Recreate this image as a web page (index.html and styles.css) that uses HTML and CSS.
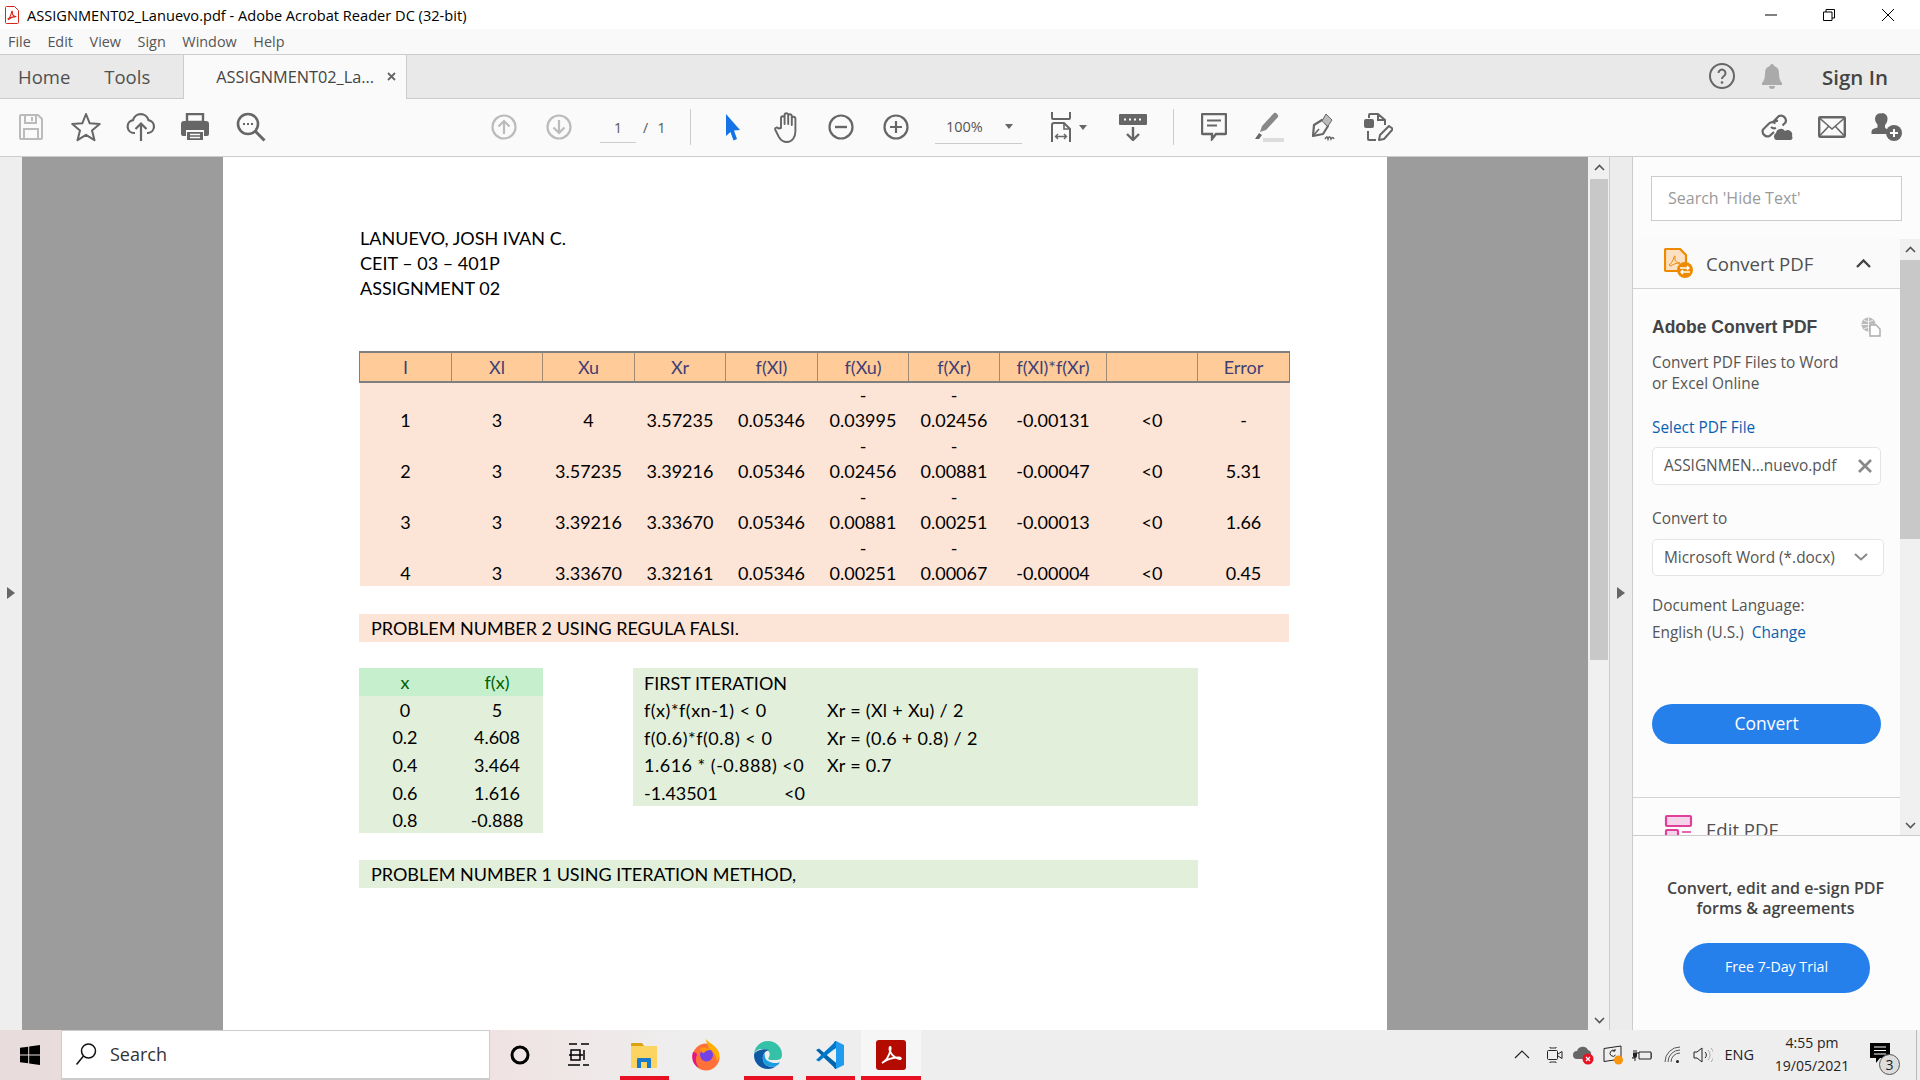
FILE: index.html
```html
<!DOCTYPE html>
<html lang="en">
<head>
  <meta charset="UTF-8" />
  <title>ASSIGNMENT02_Lanuevo.pdf - Adobe Acrobat Reader DC (32-bit)</title>
  <link rel="stylesheet" href="styles.css">
</head>
<body>
  <div class="titlebar">
    <svg class="pdf-mini" width="14" height="18" viewBox="0 0 14 18"><path d="M1.5 .5h8l4 4v12a1 1 0 0 1-1 1h-11a1 1 0 0 1-1-1v-15a1 1 0 0 1 1-1z" fill="#fff" stroke="#d8261c"/><path d="M3 13c2-1 3-4 3.600-7 .3-1.500 1-1 .8.500-.3 2 1.200 4 4 4.200-3-.2-6 .8-8 2.800z" fill="none" stroke="#d8261c" stroke-width="1.100"/></svg>
    <span class="title-text">ASSIGNMENT02_Lanuevo.pdf - Adobe Acrobat Reader DC (32-bit)</span>
    <div class="win-btns">
      <span class="win-btn"><svg width="12" height="12" viewBox="0 0 12 12"><path d="M0 6h12" stroke="#000"/></svg></span>
      <span class="win-btn"><svg width="12" height="12" viewBox="0 0 12 12"><path d="M.5 3h8.500v8.500h-8.500zM3 3v-2.500h8.500v8.500h-2.500" fill="none" stroke="#000"/></svg></span>
      <span class="win-btn"><svg width="12" height="12" viewBox="0 0 12 12"><path d="M0 0l12 12M12 0l-12 12" stroke="#000"/></svg></span>
    </div>
  </div>

  <div class="menubar">
    <span>File</span><span>Edit</span><span>View</span><span>Sign</span><span>Window</span><span>Help</span>
  </div>

  <div class="tabbar">
    <span class="tab-link tab-home">Home</span>
    <span class="tab-link tab-tools">Tools</span>
    <div class="tab-active">
      <span>ASSIGNMENT02_La...</span>
      <svg width="9" height="9" viewBox="0 0 9 9"><path d="M1 1l7 7M8 1l-7 7" stroke="#666" stroke-width="1.800"/></svg>
    </div>
    <div class="tab-right">
      <svg width="28" height="28" viewBox="0 0 28 28"><circle cx="14" cy="14" r="12" fill="none" stroke="#666" stroke-width="2"/><path d="M10.500 11a3.500 3.500 0 1 1 5.500 3c-1.300.9-2 1.500-2 3" fill="none" stroke="#666" stroke-width="2"/><circle cx="14" cy="20.500" r="1.300" fill="#666"/></svg>
      <svg class="bell" width="22" height="26" viewBox="0 0 22 26"><path d="M11 1c1.500 0 2 1 2 2 3.500 1 5 3.500 5 7 0 5 1 8 3 10v2h-20v-2c2-2 3-5 3-10 0-3.500 1.500-6 5-7 0-1 .5-2 2-2z" fill="#aaa"/><path d="M8 23h6a3 3 0 0 1-6 0z" fill="#aaa"/></svg>
      <span class="signin">Sign In</span>
    </div>
  </div>

  <div class="toolbar">
    <span class="tool"><svg width="24" height="26" viewBox="0 0 24 26"><path d="M2 1h17l4 4v19a1 1 0 0 1-1 1h-20a1 1 0 0 1-1-1v-22a1 1 0 0 1 1-1z" fill="none" stroke="#bbb" stroke-width="2"/><path d="M6 1v8h11v-8M5 25v-10h14v10" fill="none" stroke="#bbb" stroke-width="2"/><path d="M13 3v4" stroke="#bbb" stroke-width="2"/></svg></span>
    <span class="tool"><svg width="30" height="30" viewBox="0 0 30 30"><path d="M15 2l3.700 9.300 10 .7-7.700 6.400 2.500 9.800-8.500-5.400-8.500 5.400 2.500-9.800-7.700-6.400 10-.7z" fill="none" stroke="#666" stroke-width="2" stroke-linejoin="round"/></svg></span>
    <span class="tool"><svg width="30" height="30" viewBox="0 0 30 30"><path d="M9 21h-1a6.500 6.500 0 0 1-1-12.900 8 8 0 0 1 15.500 0 6.500 6.500 0 0 1-.5 12.900h-1" fill="none" stroke="#666" stroke-width="2.200"/><path d="M15 29v-17M9.500 17l5.500-5.500 5.500 5.500" fill="none" stroke="#666" stroke-width="2.200"/></svg></span>
    <span class="tool tool-print"><svg width="28" height="28" viewBox="0 0 28 28"><path d="M6 9v-8h16v8z" fill="none" stroke="#666" stroke-width="2.400"/><path d="M3 8h22a3 3 0 0 1 3 3v10a2 2 0 0 1-2 2h-3v-6h-18v6h-3a2 2 0 0 1-2-2v-10a3 3 0 0 1 3-3z" fill="#666"/><path d="M6 19h16v8h-16z" fill="#666"/><path d="M9 21.500h10M9 24.500h10" stroke="#fafafa" stroke-width="1.400"/></svg></span>
    <span class="tool tool-find"><svg width="30" height="30" viewBox="0 0 30 30"><circle cx="12" cy="12" r="10" fill="none" stroke="#666" stroke-width="2.600"/><path d="M19 19l9.500 9.500" stroke="#666" stroke-width="3"/><path d="M7 12h2M11 12h2M15 12h2" stroke="#666" stroke-width="2"/></svg></span>

    <div class="tool-mid">
      <span class="tool"><svg width="26" height="26" viewBox="0 0 26 26"><circle cx="13" cy="13" r="11.500" fill="none" stroke="#bbb" stroke-width="2.200"/><path d="M13 20v-13M7.500 12.500l5.500-5.500 5.500 5.500" fill="none" stroke="#bbb" stroke-width="2.200"/></svg></span>
      <span class="tool"><svg width="26" height="26" viewBox="0 0 26 26"><circle cx="13" cy="13" r="11.500" fill="none" stroke="#bbb" stroke-width="2.200"/><path d="M13 6v13M7.500 13.500l5.500 5.500 5.500-5.500" fill="none" stroke="#bbb" stroke-width="2.200"/></svg></span>
      <div class="page-num"><span class="page-cur">1</span><span class="page-of">/ &nbsp;1</span></div>
      <span class="sep sep-a"></span>
      <span class="tool"><svg width="18" height="28" viewBox="0 0 18 28"><path d="M2 1l14 16-6 .5 3 8.500-3.500 1.500-3-8.500-4.500 4z" fill="#1473e6"/></svg></span>
      <span class="tool tool-hand"><svg width="28" height="32" viewBox="0 0 28 32"><path d="M7 17v-10a1.800 1.800 0 0 1 3.600 0v6v-9a1.800 1.800 0 0 1 3.600 0v9v-8a1.800 1.800 0 0 1 3.600 0v9v-6.500a1.800 1.800 0 0 1 3.600 0v13c0 6-3.500 10.500-8.500 10.500-4 0-6-1.500-8-5l-3.500-7c-1-2 1.500-3.500 3-1.500z" fill="none" stroke="#666" stroke-width="1.900" stroke-linejoin="round"/></svg></span>
      <span class="tool"><svg width="26" height="26" viewBox="0 0 26 26"><circle cx="13" cy="13" r="11.500" fill="none" stroke="#666" stroke-width="2.200"/><path d="M7 13h12" stroke="#666" stroke-width="2.400"/></svg></span>
      <span class="tool"><svg width="26" height="26" viewBox="0 0 26 26"><circle cx="13" cy="13" r="11.500" fill="none" stroke="#666" stroke-width="2.200"/><path d="M7 13h12M13 7v12" stroke="#666" stroke-width="2.200"/></svg></span>
      <div class="zoom-select"><span>100%</span><i class="caret"></i></div>
      <div class="tool tool-fit"><svg width="24" height="30" viewBox="0 0 24 30"><path d="M2 0v6a1 1 0 0 0 1 1h16a1 1 0 0 0 1-1v-6" fill="none" stroke="#666" stroke-width="2"/><path d="M2 30v-17a2 2 0 0 1 2-2h10l6 6v13" fill="none" stroke="#666" stroke-width="2"/><path d="M14 11v6h6" fill="none" stroke="#666" stroke-width="1.600"/><path d="M5.500 24.500h11M8 22l-2.500 2.500 2.500 2.500M14 22l2.500 2.500-2.500 2.500" fill="none" stroke="#666" stroke-width="1.400"/></svg><i class="caret"></i></div>
      <span class="tool"><svg width="30" height="28" viewBox="0 0 30 28"><path d="M2 1h26a1 1 0 0 1 1 1v9a1 1 0 0 1-1 1h-26a1 1 0 0 1-1-1v-9a1 1 0 0 1 1-1z" fill="#666"/><path d="M6 6.500h2M11 6.500h2M16 6.500h2M21 6.500h2" stroke="#fafafa" stroke-width="2"/><path d="M15 14v13M9 21l6 6 6-6" fill="none" stroke="#666" stroke-width="2.400"/></svg></span>
      <span class="sep sep-b"></span>
      <span class="tool"><svg width="26" height="28" viewBox="0 0 26 28"><path d="M2 1h22a1 1 0 0 1 1 1v18a1 1 0 0 1-1 1h-9l-4 5v-5h-9a1 1 0 0 1-1-1v-18a1 1 0 0 1 1-1z" fill="none" stroke="#666" stroke-width="2.400"/><path d="M6 7.500h14M6 12.500h10" stroke="#666" stroke-width="1.800"/></svg></span>
      <span class="tool"><svg width="30" height="30" viewBox="0 0 30 30"><path d="M6 20l2-6 12-13c1.500-1 5 2 4 4l-12 13z" fill="#888"/><path d="M5 21l3 2-3 4h-4z" fill="#666"/><path d="M9 26h21v4h-21z" fill="#ddd"/></svg></span>
      <span class="tool"><svg width="30" height="30" viewBox="0 0 30 30"><path d="M4 24l1-11 8-5 6 6-5 8z" fill="none" stroke="#666" stroke-width="2.200" stroke-linejoin="round"/><path d="M13 9l4-7 6 6-4 6" fill="#bbb" stroke="#666" stroke-width="1"/><path d="M4 24l6-7" stroke="#666" stroke-width="1.600"/><path d="M16 27c2-3 2-3 3 0 1-3 2-3 3 0 1-2 2-2 3 0" fill="none" stroke="#666" stroke-width="1.600"/></svg></span>
      <span class="tool tool-edit"><svg width="30" height="30" viewBox="0 0 30 30"><rect x="1" y="7" width="10" height="9" rx="2" fill="#666"/><path d="M6 6v-3a1 1 0 0 1 1-1h8l7 6v5M22 8h-7v-6" fill="none" stroke="#666" stroke-width="2"/><path d="M5 19v8a1 1 0 0 0 1 1h7" fill="none" stroke="#666" stroke-width="2"/><path d="M16 28l1-5 9-9 4 3-9 10z" fill="none" stroke="#666" stroke-width="2" stroke-linejoin="round"/></svg></span>
    </div>

    <div class="tool-end">
      <span class="tool"><svg width="32" height="28" viewBox="0 0 32 28"><path d="M12 9l6-6a5 5 0 0 1 6.500 6.500l-3 3M13 19l-4.500 4a5 5 0 0 1-6.500-6.500l6-6a5 5 0 0 1 6.500 0M17 8a5 5 0 0 0-4 1M10 14a5 5 0 0 0 5 1" fill="none" stroke="#666" stroke-width="2.200"/><path d="M15 27a4 4 0 0 1 0-7 5 5 0 0 1 9-2 4.500 4.500 0 0 1 7 5 3 3 0 0 1-1 4z" fill="#666"/></svg></span>
      <span class="tool"><svg width="28" height="22" viewBox="0 0 28 22"><rect x="1.200" y="1.200" width="25.600" height="19.600" rx="1" fill="none" stroke="#666" stroke-width="2.400"/><path d="M1.500 2l12.500 11 12.500-11M1.500 20l9-9.500M26.500 20l-9-9.500" fill="none" stroke="#666" stroke-width="1.600"/></svg></span>
      <span class="tool"><svg width="32" height="30" viewBox="0 0 32 30"><path d="M11 1a5.500 5.500 0 0 1 5.500 6c0 3-1.500 5-2.500 6v3l3 1.500a8 8 0 0 0-1.500 4.500h-15v-2c0-2 1-3 3-3.500l3-1v-3c-1-1-2.500-3-2.500-6a5.500 5.500 0 0 1 7-5z" fill="#666"/><circle cx="23" cy="21" r="8" fill="#666"/><path d="M19 21h8M23 17v8" stroke="#fff" stroke-width="2"/></svg></span>
    </div>
  </div>

  <div class="workspace">
    <div class="left-gutter"><i class="tri-right"></i></div>

    <div class="viewer">
      <div class="page">
        <div class="author">
          <div>LANUEVO, JOSH IVAN C.</div>
          <div>CEIT – 03 – 401P</div>
          <div>ASSIGNMENT 02</div>
        </div>

        <table class="iter-table">
          <colgroup>
            <col class="c92"><col class="c91"><col class="c92"><col class="c91"><col class="c92"><col class="c91"><col class="c91"><col class="c107"><col class="c91"><col class="c92">
          </colgroup>
          <thead>
            <tr><th>I</th><th>Xl</th><th>Xu</th><th>Xr</th><th>f(Xl)</th><th>f(Xu)</th><th>f(Xr)</th><th>f(Xl)*f(Xr)</th><th></th><th>Error</th></tr>
          </thead>
          <tbody>
            <tr><td>1</td><td>3</td><td>4</td><td>3.57235</td><td>0.05346</td><td><span class="dash">-</span>0.03995</td><td><span class="dash">-</span>0.02456</td><td>-0.00131</td><td>&lt;0</td><td>-</td></tr>
            <tr><td>2</td><td>3</td><td>3.57235</td><td>3.39216</td><td>0.05346</td><td><span class="dash">-</span>0.02456</td><td><span class="dash">-</span>0.00881</td><td>-0.00047</td><td>&lt;0</td><td>5.31</td></tr>
            <tr><td>3</td><td>3</td><td>3.39216</td><td>3.33670</td><td>0.05346</td><td><span class="dash">-</span>0.00881</td><td><span class="dash">-</span>0.00251</td><td>-0.00013</td><td>&lt;0</td><td>1.66</td></tr>
            <tr class="row-cut"><td>4</td><td>3</td><td>3.33670</td><td>3.32161</td><td>0.05346</td><td><span class="dash">-</span>0.00251</td><td><span class="dash">-</span>0.00067</td><td>-0.00004</td><td>&lt;0</td><td>0.45</td></tr>
          </tbody>
        </table>

        <div class="bar bar-orange">PROBLEM NUMBER 2 USING REGULA FALSI.</div>

        <div class="green-row">
          <table class="xy-table">
            <thead><tr><th>x</th><th>f(x)</th></tr></thead>
            <tbody>
              <tr><td>0</td><td>5</td></tr>
              <tr><td>0.2</td><td>4.608</td></tr>
              <tr><td>0.4</td><td>3.464</td></tr>
              <tr><td>0.6</td><td>1.616</td></tr>
              <tr><td>0.8</td><td>-0.888</td></tr>
            </tbody>
          </table>
          <div class="first-iter">
            <div class="iter-line">FIRST ITERATION</div>
            <div class="iter-line"><span class="iter-a">f(x)*f(xn-1) &lt; 0</span><span class="iter-b">Xr = (Xl + Xu) / 2</span></div>
            <div class="iter-line"><span class="iter-a">f(0.6)*f(0.8) &lt; 0</span><span class="iter-b">Xr = (0.6 + 0.8) / 2</span></div>
            <div class="iter-line"><span class="iter-a">1.616 * (-0.888) &lt;0</span><span class="iter-b">Xr = 0.7</span></div>
            <div class="iter-line"><span class="iter-split"><span>-1.43501</span><span>&lt;0</span></span></div>
          </div>
        </div>

        <div class="bar bar-green">PROBLEM NUMBER 1 USING ITERATION METHOD,</div>
      </div>
    </div>

    <div class="vscroll">
      <svg width="11" height="7" viewBox="0 0 11 7"><path d="M1 6l4.500-4.500 4.500 4.500" fill="none" stroke="#555" stroke-width="1.600"/></svg>
      <div class="vthumb"></div>
      <svg class="vscroll-down" width="11" height="7" viewBox="0 0 11 7"><path d="M1 1l4.500 4.500 4.500-4.500" fill="none" stroke="#555" stroke-width="1.600"/></svg>
    </div>

    <div class="right-gutter"><i class="tri-right"></i></div>

    <aside class="panel">
      <div class="panel-search"><div class="search-box">Search 'Hide Text'</div></div>
      <div class="panel-scroll">
        <div class="panel-body">
          <div class="sec-head">
            <svg width="30" height="30" viewBox="0 0 30 30"><path d="M2 1h14l6 6v15a1 1 0 0 1-1 1h-19a1 1 0 0 1-1-1v-20a1 1 0 0 1 1-1z" fill="#fbe0c3" stroke="#ee8a00" stroke-width="2.200"/><path d="M5 17c2-1 4-4 5-8 .5-2 1.500-1 1 1-.5 3 2 5 5 5-3 0-7 1-9 3z" fill="none" stroke="#ee8a00"/><circle cx="21" cy="22" r="8" fill="#ee8a00"/><path d="M16 20h9M23 18l2 2-2 2M26 24h-9M19 22l-2 2 2 2" fill="none" stroke="#fff" stroke-width="1.400"/></svg>
            <span class="sec-title">Convert PDF</span>
            <svg class="sec-chev" width="15" height="9" viewBox="0 0 15 9"><path d="M1 8l6.500-6.500 6.500 6.500" fill="none" stroke="#444" stroke-width="2.400"/></svg>
          </div>
          <div class="sec-content">
            <div class="acp-head">
              <span>Adobe Convert PDF</span>
              <svg width="20" height="20" viewBox="0 0 20 20"><circle cx="7.500" cy="7.500" r="7" fill="#bbb"/><path d="M1 7.500h13M7.500 1v13M3 3c3 2 6 2 9 0M3 12c3-2 6-2 9 0" fill="none" stroke="#fff" stroke-width=".8"/><path d="M9 8h6l4 4v7h-10z" fill="#fff" stroke="#aaa" stroke-width="1.400"/></svg>
            </div>
            <p class="acp-desc">Convert PDF Files to Word<br>or Excel Online</p>
            <div class="lbl lbl-link">Select PDF File</div>
            <div class="field field-file">
              <span>ASSIGNMEN...nuevo.pdf</span>
              <svg width="14" height="14" viewBox="0 0 14 14"><path d="M1 1l12 12M13 1l-12 12" stroke="#888" stroke-width="2.600"/></svg>
            </div>
            <div class="lbl lbl-to">Convert to</div>
            <div class="field field-select">
              <span>Microsoft Word (*.docx)</span>
              <svg width="14" height="8" viewBox="0 0 14 8"><path d="M1 1l6 5.500 6-5.500" fill="none" stroke="#888" stroke-width="2"/></svg>
            </div>
            <div class="lbl lbl-lang">Document Language:</div>
            <div class="lbl lbl-eng">English (U.S.) &nbsp;<a>Change</a></div>
            <div class="btn-convert">Convert</div>
          </div>
          <div class="sec-head sec-edit">
            <svg width="30" height="30" viewBox="0 0 30 30"><rect x="2" y="2" width="25" height="10" rx="1" fill="#f5d3e8" stroke="#e0409c" stroke-width="2.200"/><rect x="2" y="16" width="12" height="12" rx="1" fill="#f5d3e8" stroke="#e0409c" stroke-width="2.200"/><path d="M18 18h9" stroke="#e0409c" stroke-width="1.600"/></svg>
            <span class="sec-title">Edit PDF</span>
          </div>
        </div>
        <div class="panel-track">
          <div class="track-btn"><svg width="11" height="7" viewBox="0 0 11 7"><path d="M1 6l4.500-4.500 4.500 4.500" fill="none" stroke="#555" stroke-width="1.600"/></svg></div>
          <div class="track-thumb"></div>
          <svg class="track-down" width="11" height="7" viewBox="0 0 11 7"><path d="M1 1l4.500 4.500 4.500-4.500" fill="none" stroke="#555" stroke-width="1.600"/></svg>
        </div>
      </div>
      <div class="promo">
        <p>Convert, edit and e-sign PDF<br>forms &amp; agreements</p>
        <div class="btn-trial">Free 7-Day Trial</div>
      </div>
    </aside>
  </div>

  <div class="taskbar">
    <div class="start"><svg width="20" height="20" viewBox="0 0 20 20"><path d="M0 2.800l8.200-1.100v7.900h-8.200zM9.200 1.500l10.800-1.500v9.600h-10.800zM0 10.400h8.200v7.900l-8.200-1.100zM9.200 10.400h10.800v9.600l-10.800-1.500z" fill="#000"/></svg></div>
    <div class="task-search">
      <svg width="22" height="24" viewBox="0 0 22 24"><circle cx="13.500" cy="9" r="7" fill="none" stroke="#111" stroke-width="1.500"/><path d="M8.500 14l-7 8.500" stroke="#111" stroke-width="1.500"/></svg>
      <span>Search</span>
    </div>
    <div class="task-icons">
      <span class="task-ic ic-cortana"><svg width="20" height="20" viewBox="0 0 20 20"><circle cx="10" cy="10" r="8" fill="none" stroke="#000" stroke-width="3"/></svg></span>
      <span class="task-ic ic-view"><svg width="22" height="24" viewBox="0 0 22 24"><path d="M1 1h8M13 1h8M3 7h9v10h-9zM16 7v10M0 22h12M15 22h6M1 12h14" fill="none" stroke="#000" stroke-width="1.500"/></svg></span>
      <span class="task-ic ic-run ic-explorer"><svg width="28" height="28" viewBox="0 0 28 28"><path d="M1 3a1 1 0 0 1 1-1h10l2 3h-13z" fill="#dba10f"/><path d="M1 5h26v21a1 1 0 0 1-1 1h-24a1 1 0 0 1-1-1z" fill="#fcd462"/><path d="M7 27v-9a1 1 0 0 1 1-1h12a1 1 0 0 1 1 1v9h-4v-6h-6v6z" fill="#1979ca"/></svg></span>
      <span class="task-ic ic-firefox"><svg width="30" height="32" viewBox="0 0 30 32"><circle cx="15" cy="18" r="13.500" fill="#ff7139"/><path d="M15 0c3 4 9 6 12 12 2 4 1 8-1 10-1-6-4-10-8-13-1-3-3-6-3-9z" fill="#ffb000"/><path d="M2 13c-2 6 0 13 6 16-3-4-4-9-2-13 0-2-2-3-4-3z" fill="#e31587"/><circle cx="15.500" cy="16" r="6.500" fill="#7542e5"/><path d="M9 10c3-2 9-2 12 1-3 0-6 0-8 3-2 0-3-2-4-4z" fill="#ff980e"/></svg></span>
      <span class="task-ic ic-run ic-edge"><svg width="30" height="30" viewBox="0 0 30 30"><path d="M15 1a14 14 0 0 1 14 14c0 2-1 5-5 5h-7c-2 0-2-2-1-3 2-3 0-8-6-8-5 0-8 2-9 5 1-8 7-13 14-13z" fill="#35c1a7"/><path d="M1 15c0 8 6 14 14 14 3 0 6-1 8-3-6 2-12 0-13-6-1-5 2-9 6-10-3-1-6-1-9 0-4 1-6 3-6 5z" fill="#0c59a4"/><path d="M10 20c1 6 7 8 13 6 2-1 3-2 4-4-3 2-9 1-12-1-2-1-4-4-3-8-2 2-3 4-2 7z" fill="#1b9de2"/></svg></span>
      <span class="task-ic ic-run ic-code"><svg width="30" height="30" viewBox="0 0 30 30"><path d="M21 1l8 4v20l-8 4-13-12z" fill="#1f9cf0"/><path d="M21 1v28l-2-1v-26z" fill="#0065a9"/><path d="M21 8l-10 7.500 10 7.500z" fill="#eef0f0"/><path d="M1 10l3-1.500 17 14.500v6z" fill="#0065a9"/><path d="M1 20l3 1.500 17-14.500v-6z" fill="#007acc"/></svg></span>
      <span class="task-ic ic-run ic-acro"><svg width="30" height="30" viewBox="0 0 30 30"><rect width="30" height="30" rx="3" fill="#b30b00"/><path d="M6 23c4-2 7-7 8.500-13 .7-3-.5-4-1-2-.5 4 4 10 10 11 2 .3 2-1.500-.5-1.500-6 0-12 1.500-17 5.500" fill="none" stroke="#fff" stroke-width="1.800"/></svg></span>
    </div>
    <div class="tray">
      <span class="tray-ic tray-up"><svg width="16" height="9" viewBox="0 0 16 9"><path d="M1 8l7-7 7 7" fill="none" stroke="#222" stroke-width="1.200"/></svg></span>
      <span class="tray-ic"><svg width="16" height="16" viewBox="0 0 16 16"><path d="M3 0v1h6v-1M3 16v-1h6v1" fill="none" stroke="#333"/><rect x=".5" y="3.500" width="10" height="9" rx="1" fill="none" stroke="#222"/><path d="M11 7l4-2.500v7l-4-2.500" fill="none" stroke="#222"/></svg></span>
      <span class="tray-ic"><svg width="22" height="20" viewBox="0 0 22 20"><path d="M4 14a4 4 0 0 1 0-8 6 6 0 0 1 11-1 4 4 0 0 1 3 5h-6v4z" fill="#666"/><circle cx="15" cy="14" r="5.500" fill="#e81123"/><path d="M13 12l4 4M17 12l-4 4" stroke="#fff" stroke-width="1.300"/></svg></span>
      <span class="tray-ic"><svg width="20" height="20" viewBox="0 0 20 20"><path d="M1 3.500l17-2.500v13l-17 2.500z" fill="none" stroke="#222"/><path d="M12 6a3 3 0 1 0 .5 4M12 6v-2M12 6h-2.500" fill="none" stroke="#222"/><circle cx="15.500" cy="15" r="4.500" fill="#f7950e"/></svg></span>
      <span class="tray-ic"><svg width="20" height="14" viewBox="0 0 20 14"><path d="M7 4h12v7h-12zM19 6h1v3h-1M7 5h-3M0 9v1h3" fill="none" stroke="#222"/><path d="M1 5h4v3a2 2 0 0 1-4 0z" fill="#222"/><path d="M2 2v3M4 2v3M3 10v3" stroke="#222"/></svg></span>
      <span class="tray-ic tray-wifi"><svg width="18" height="18" viewBox="0 0 18 18"><path d="M1 16a15 15 0 0 1 15-15M4 16a12 12 0 0 1 12-12M7 16a9 9 0 0 1 9-9" fill="none" stroke="#555" stroke-width="1"/><circle cx="13.500" cy="15.500" r="1.500" fill="#222"/></svg></span>
      <span class="tray-ic"><svg width="20" height="16" viewBox="0 0 20 16"><path d="M1 5h3l5-4v14l-5-4h-3z" fill="none" stroke="#222"/><path d="M12 5a4 4 0 0 1 0 6" fill="none" stroke="#222"/><path d="M15 3a7 7 0 0 1 0 10M18 1a10 10 0 0 1 0 14" fill="none" stroke="#aaa"/></svg></span>
      <span class="tray-lang">ENG</span>
      <div class="tray-clock"><span>4:55 pm</span><span>19/05/2021</span></div>
      <span class="tray-notif"><svg width="21" height="20" viewBox="0 0 21 20"><path d="M0 0h20v15h-10l-4 5v-5h-6z" fill="#000"/><path d="M4 4h12M4 7.500h12M4 11h12" stroke="#fff"/></svg><b class="notif-count">3</b></span>
      <span class="tray-show"></span>
    </div>
  </div>
</body>
</html>
```

FILE: styles.css
```css
* { box-sizing: border-box; }
html, body { margin: 0; height: 100%; }
body {
  width: 1920px;
  height: 1080px;
  overflow: hidden;
  display: flex;
  flex-direction: column;
  font-family: "Open Sans", sans-serif;
  color: #333;
  background: #fff;
}
svg { display: block; flex: none; }

/* window chrome */
.titlebar {
  height: 29px;
  display: flex;
  align-items: center;
  padding-left: 5px;
  background: #fff;
}
.pdf-mini { margin-right: 8px; }
.title-text { font-size: 14.600px; color: #000; }
.win-btns { margin-left: auto; display: flex; padding-right: 3px; }
.win-btn { width: 58.500px; height: 29px; display: flex; align-items: center; justify-content: center; }

.menubar {
  height: 25px;
  display: flex;
  gap: 16.600px;
  align-items: center;
  padding-left: 8px;
  font-size: 14.400px;
  color: #555;
  background: #f9f9f9;
}

.tabbar {
  height: 45px;
  display: flex;
  align-items: center;
  background: #e9e9e9;
  border-top: 1px solid #ccc;
  border-bottom: 1px solid #ccc;
}
.tab-link { font-size: 18.500px; color: #505050; }
.tab-home { margin-left: 18px; }
.tab-tools { margin-left: 34px; }
.tab-active {
  width: 224px;
  height: 44px;
  margin: 0 0 -1px 33px;
  padding-left: 32px;
  display: flex;
  align-items: center;
  gap: 13px;
  font-size: 16.300px;
  color: #444;
  background: #fafafa;
  border-left: 1px solid #ccc;
  border-right: 1px solid #ccc;
  align-self: flex-start;
}
.tab-right { margin-left: auto; display: flex; align-items: center; }
.tab-right .bell { margin-left: 25px; }
.signin { margin: 2px 32px 0 39px; font-size: 20.500px; font-weight: 600; color: #444; }

.toolbar {
  height: 58px;
  display: flex;
  align-items: center;
  background: #fafafa;
  border-bottom: 1px solid #ccc;
  padding-left: 3px;
}
.tool { width: 55px; height: 40px; display: flex; align-items: center; justify-content: center; flex: none; }
.tool-print { margin-left: -1px; }
.tool-find { margin-left: 1px; }
.tool-hand { margin-right: -2px; }
.tool-edit { margin-left: -1px; }
.tool-mid { display: flex; align-items: center; margin-left: 198px; }
.page-num { width: 100px; display: flex; align-items: center; font-size: 14px; color: #555; padding-left: 14px; }
.page-cur { width: 36px; height: 31px; line-height: 31px; text-align: center; border-bottom: 1px solid #ccc; }
.page-of { margin-left: 7px; word-spacing: 1px; }
.sep { width: 1px; height: 36px; background: #ccc; flex: none; }
.sep-a { margin: 0 14px 0 4px; }
.sep-b { margin: 0 12px 0 13px; }
.zoom-select {
  width: 87px;
  height: 34px;
  margin: 0 13px 0 12px;
  padding: 0 9px 0 11px;
  display: flex;
  align-items: center;
  justify-content: space-between;
  font-size: 14.500px;
  color: #555;
  border-bottom: 1px solid #ccc;
}
.caret { width: 0; height: 0; border: 4px solid transparent; border-top: 5px solid #666; border-bottom: 0; flex: none; }
.tool-fit { gap: 5px; justify-content: flex-start; padding-left: 15px; width: 70px; }
.tool-end { margin-left: auto; display: flex; padding-right: 6px; }

/* middle area */
.workspace { height: 874px; display: flex; }
.left-gutter {
  width: 22px;
  background: #eee;
  display: flex;
  align-items: center;
  justify-content: center;
}
.tri-right { width: 0; height: 0; border: 6px solid transparent; border-left: 8px solid #666; border-right: 0; }
.viewer {
  width: 1566px;
  background: #9c9c9c;
  padding-left: 201px;
  overflow: hidden;
}
.page {
  width: 1164px;
  height: 100%;
  padding: 69px 0 0 136px;
  background: #fff;
  color: #000;
  font-family: Lato, "Liberation Sans", sans-serif;
  font-size: 18px;
}
.author { line-height: 25.200px; height: 125px; padding-left: 1px; }

.iter-table, .xy-table { border-collapse: collapse; table-layout: fixed; }
.iter-table { width: 930px; }
.c92 { width: 92px; }
.c91 { width: 91px; }
.c107 { width: 107px; }
.iter-table th {
  height: 30px;
  padding: 0;
  font-weight: 400;
  color: #3f3f76;
  background: #ffcc99;
  border-top: 2px solid #7f7f7f;
  border-bottom: 2px solid #7f7f7f;
  border-left: 1px solid #a08a72;
  border-right: 1px solid #a08a72;
}
.iter-table th:first-child { border-left: 1px solid #7f7f7f; }
.iter-table th:last-child { border-right: 1px solid #7f7f7f; }
.iter-table td {
  height: 51px;
  padding: 0;
  line-height: 25.500px;
  text-align: center;
  vertical-align: bottom;
  background: #fce4d6;
}
.iter-table .row-cut td { height: 50px; line-height: 25px; }
.dash { display: block; }

.bar { height: 28px; line-height: 29px; padding-left: 12px; }
.bar-orange { width: 930px; margin-top: 28px; background: #fce4d6; }
.bar-green { width: 839px; margin-top: 27px; background: #e2efda; }

.green-row { display: flex; gap: 90px; margin-top: 26px; align-items: flex-start; }
.xy-table { width: 184px; }
.xy-table th, .xy-table td { height: 27.600px; padding: 1px 0 0; font-weight: 400; text-align: center; background: #e2efda; }
.xy-table th { color: #006100; background: #c6efce; }
.first-iter { width: 565px; height: 138px; background: #e2efda; padding: 2px 0 0 11px; }
.iter-line { height: 27.500px; line-height: 27.500px; display: flex; white-space: nowrap; }
.iter-a { width: 183px; flex: none; letter-spacing: .5px; }
.iter-b { letter-spacing: .3px; }
.iter-split { width: 183px; display: flex; justify-content: space-between; padding-right: 22px; }

/* page scrollbar */
.vscroll {
  width: 22px;
  padding: 7px 0 6px 1px;
  background: #f0f0f0;
  display: flex;
  flex-direction: column;
  align-items: center;
  border-right: 1px solid #ccc;
}
.vthumb { width: 18px; height: 481px; margin-top: 8px; background: #c8c8c8; }
.vscroll-down { margin-top: auto; }
.right-gutter {
  width: 23px;
  background: #ececec;
  border-right: 1px solid #ccc;
  display: flex;
  align-items: center;
  justify-content: center;
}

/* right panel */
.panel { width: 287px; display: flex; flex-direction: column; background: #fcfcfc; }
.panel-search { height: 82px; padding: 19px 18px 0; }
.search-box {
  width: 251px;
  height: 45px;
  line-height: 43px;
  padding-left: 16px;
  font-size: 16px;
  color: #9a9a9a;
  background: #fff;
  border: 1px solid #ccc;
}
.panel-scroll { height: 597px; display: flex; overflow: hidden; border-bottom: 1px solid #ccc; }
.panel-body { width: 267px; flex: none; overflow: hidden; }
.sec-head {
  height: 50px;
  display: flex;
  align-items: center;
  padding-left: 31px;
  background: #fafafa;
  border-bottom: 1px solid #d4d4d4;
}
.sec-title { margin-left: 12px; font-size: 18.600px; color: #505050; }
.sec-chev { margin-left: 43px; }
.sec-content { height: 508px; padding: 28px 0 0 19px; font-size: 15.400px; color: #555; }
.acp-head {
  width: 229px;
  display: flex;
  justify-content: space-between;
  align-items: center;
  font-family: "Liberation Sans", sans-serif;
  font-size: 17.500px;
  font-weight: 700;
  color: #444;
}
.acp-desc { margin: 14px 0 0; line-height: 21px; }
.lbl { line-height: 20px; }
.lbl-link { margin-top: 24px; color: #0b5fb0; }
.field {
  display: flex;
  align-items: center;
  justify-content: space-between;
  padding: 0 8px 0 11px;
  background: #fff;
  border: 1px solid #e4e4e4;
  border-radius: 5px;
  font-size: 15.400px;
}
.field-file { width: 229px; height: 38px; margin-top: 9px; }
.lbl-to { margin-top: 24px; }
.field-select { width: 232px; height: 37px; margin-top: 10px; padding-right: 15px; }
.lbl-lang { margin-top: 20px; }
.lbl-eng { margin-top: 7px; }
.lbl-eng a { color: #0b5fb0; }
.btn-convert {
  width: 229px;
  height: 40px;
  margin-top: 61px;
  line-height: 38px;
  text-align: center;
  font-size: 17.500px;
  color: #fff;
  background: #2680eb;
  border-radius: 20px;
}
.sec-edit { height: 50px; align-items: flex-start; padding-top: 16px; border-bottom: 0; border-top: 1px solid #d4d4d4; background: #fcfcfc; }
.sec-edit .sec-title { padding-top: 3px; }

.panel-track {
  width: 20px;
  display: flex;
  flex-direction: column;
  align-items: center;
  background: #f0f0f0;
}
.track-btn { height: 21px; display: flex; align-items: center; justify-content: center; }
.track-thumb { width: 100%; height: 279px; background: #c8c8c8; }
.track-down { margin-top: auto; margin-bottom: 6px; }

.promo { flex: 1; text-align: center; padding-top: 42px; }
.promo p { margin: 0; padding-right: 2px; font-size: 16px; line-height: 20px; font-weight: 600; color: #444; }
.btn-trial {
  width: 187px;
  height: 50px;
  margin: 25px 0 0 50px;
  line-height: 48px;
  font-size: 14.200px;
  color: #fff;
  background: #2680eb;
  border-radius: 25px;
}

/* windows taskbar */
.taskbar { height: 50px; display: flex; align-items: center; background: #eeeeee; }
.start {
  width: 61px;
  height: 50px;
  padding-right: 2px;
  display: flex;
  align-items: center;
  justify-content: center;
  background: #e8dcdd;
}
.task-search {
  width: 429px;
  height: 50px;
  display: flex;
  align-items: center;
  padding-left: 13px;
  gap: 13px;
  font-size: 18px;
  color: #333;
  background: #fff;
  border: 1px solid #ccc;
  border-bottom-width: 2px;
}
.task-icons { display: flex; height: 50px; padding-left: 2px; background: linear-gradient(90deg, #f0e2e2, #eeeeee 200px); }
.task-ic { width: 62px; height: 50px; display: flex; align-items: center; justify-content: center; flex: none; position: relative; }
.ic-cortana { width: 55px; }
.ic-view { width: 63px; margin-right: 3px; }
.ic-acro { width: 60px; background: #f6f6f6; }
.ic-run::after {
  content: "";
  position: absolute;
  left: 7px;
  right: 6px;
  bottom: 0;
  height: 4px;
  background: #e81123;
}
.ic-acro.ic-run::after { left: 0; right: 0; }

.tray { margin-left: auto; height: 50px; display: flex; align-items: center; font-size: 14.500px; color: #222; }
.tray-ic { width: 29px; display: flex; justify-content: center; flex: none; }
.tray-up { width: 34px; margin-right: 1px; }
.tray-wifi { margin-left: 2px; margin-right: 1px; }
.tray-lang { margin: 0 15px 0 7px; }
.tray-clock { display: flex; flex-direction: column; align-items: center; gap: 3px; width: 86px; line-height: 20px; font-size: 14px; margin-right: 2px; }
.tray-notif { width: 30px; height: 34px; margin: 0 16px 0 13px; position: relative; padding-top: 5px; }
.notif-count {
  position: absolute;
  left: 9px;
  top: 16px;
  width: 21px;
  height: 21px;
  line-height: 19px;
  text-align: center;
  font-size: 14px;
  font-weight: 400;
  background: #ddd;
  border: 1px solid #555;
  border-radius: 50%;
}
.tray-show { width: 4px; height: 50px; border-left: 1px solid #bbb; }
```
